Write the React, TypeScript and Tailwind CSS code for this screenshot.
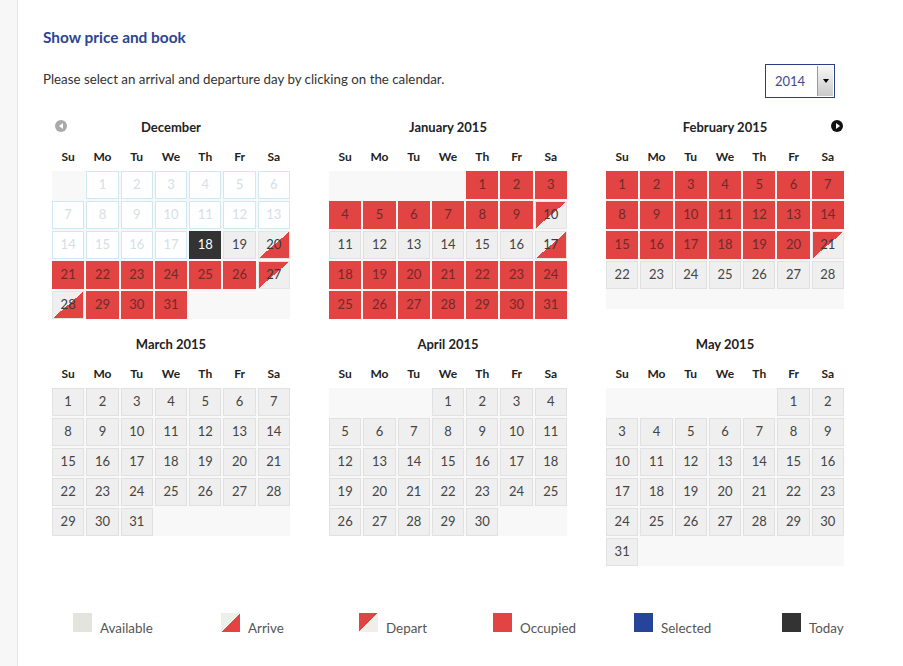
import React from "react";

type Status = "past" | "avail" | "occ" | "today" | "arrive" | "depart";

const cellClass: Record<Status, string> = {
  past: "bg-white border border-[#cfe8f2] text-[#d3e0e6]",
  avail: "bg-[#efefef] border border-[#e1e1e1] text-[#444]",
  occ: "bg-[#e24343] border border-[#e24343] text-[#702a2a]",
  today: "bg-[#333333] border border-[#333333] text-white",
  arrive:
    "border border-[#e4e4e4] bg-[linear-gradient(to_bottom_right,#efefef_50%,#e24343_50%)] text-[#3a3a3a]",
  depart:
    "border border-[#e4e4e4] bg-[linear-gradient(to_bottom_right,#e24343_50%,#efefef_50%)] text-[#3a3a3a]",
};

type Month = {
  title: string;
  start: number;
  days: number;
  status: (d: number) => Status;
  extra?: boolean;
  prev?: boolean;
  next?: boolean;
};

const months: Month[] = [
  {
    title: "December",
    start: 1,
    days: 31,
    prev: true,
    status: (d) => {
      if (d < 18) return "past";
      if (d === 18) return "today";
      if (d === 19) return "avail";
      if (d === 20 || d === 28) return "arrive";
      if (d === 27) return "depart";
      return "occ";
    },
  },
  {
    title: "January 2015",
    start: 4,
    days: 31,
    status: (d) => {
      if (d === 10) return "depart";
      if (d === 17) return "arrive";
      if (d >= 11 && d <= 16) return "avail";
      return "occ";
    },
  },
  {
    title: "February 2015",
    start: 0,
    days: 28,
    next: true,
    extra: true,
    status: (d) => {
      if (d <= 20) return "occ";
      if (d === 21) return "depart";
      return "avail";
    },
  },
  { title: "March 2015", start: 0, days: 31, status: () => "avail" },
  { title: "April 2015", start: 3, days: 30, status: () => "avail" },
  { title: "May 2015", start: 5, days: 31, status: () => "avail" },
];

const dayNames = ["Su", "Mo", "Tu", "We", "Th", "Fr", "Sa"];

function MonthView({ m }: { m: Month }) {
  const total = Math.ceil((m.start + m.days) / 7) * 7;
  const cells: (number | null)[] = [];
  for (let i = 0; i < total; i++) {
    const d = i - m.start + 1;
    cells.push(d >= 1 && d <= m.days ? d : null);
  }
  return (
    <div className="relative w-[238px]">
      {m.prev && (
        <div className="absolute left-[3px] top-[3px] flex h-[12px] w-[12px] items-center justify-center rounded-full bg-[#a9a9a9]">
          <div className="ml-[-1px] h-0 w-0 border-y-[3px] border-r-[4px] border-y-transparent border-r-white" />
        </div>
      )}
      {m.next && (
        <div className="absolute right-[1px] top-[3px] flex h-[12px] w-[12px] items-center justify-center rounded-full bg-[#111]">
          <div className="ml-[1px] h-0 w-0 border-y-[3px] border-l-[4px] border-y-transparent border-l-white" />
        </div>
      )}
      <div className="h-[20px] text-center text-[13px] font-bold leading-[20px] text-[#222]">
        {m.title}
      </div>
      <div className="mt-[10px] grid grid-cols-7 gap-x-[2px]">
        {dayNames.map((n) => (
          <div
            key={n}
            className="h-[20px] text-center text-[12px] font-bold leading-[20px] text-[#222]"
          >
            {n}
          </div>
        ))}
      </div>
      <div className="mt-[4px] bg-[#f8f8f8]">
        <div className="grid grid-cols-7 gap-[2px]">
          {cells.map((d, i) =>
            d === null ? (
              <div key={i} className="h-[28px]" />
            ) : (
              <div
                key={i}
                className={
                  "flex h-[28px] items-center justify-center text-[13px] " +
                  cellClass[m.status(d)]
                }
              >
                {d}
              </div>
            )
          )}
        </div>
        {m.extra && <div className="mt-[2px] h-[18px]" />}
      </div>
    </div>
  );
}

function Legend() {
  const items: { label: string; w: string; swatch: React.ReactNode }[] = [
    {
      label: "Available",
      w: "w-[148px]",
      swatch: <div className="h-[19px] w-[19px] bg-[#e3e4de]" />,
    },
    {
      label: "Arrive",
      w: "w-[138px]",
      swatch: (
        <div className="h-[19px] w-[19px] bg-[linear-gradient(to_bottom_right,#efeee9_50%,#e24343_50%)]" />
      ),
    },
    {
      label: "Depart",
      w: "w-[134px]",
      swatch: (
        <div className="h-[19px] w-[19px] bg-[linear-gradient(to_bottom_right,#e24343_50%,#efeee9_50%)]" />
      ),
    },
    {
      label: "Occupied",
      w: "w-[141px]",
      swatch: <div className="h-[19px] w-[19px] bg-[#e24343]" />,
    },
    {
      label: "Selected",
      w: "w-[148px]",
      swatch: <div className="h-[19px] w-[19px] bg-[#26449a]" />,
    },
    {
      label: "Today",
      w: "w-auto",
      swatch: <div className="h-[19px] w-[19px] bg-[#333333]" />,
    },
  ];
  return (
    <div className="ml-[30px] mt-[47px] flex">
      {items.map((it) => (
        <div key={it.label} className={"flex items-start " + it.w}>
          {it.swatch}
          <div className="ml-[8px] mt-[5px] text-[13.4px] leading-[20px] text-[#555]">
            {it.label}
          </div>
        </div>
      ))}
    </div>
  );
}

export default function App() {
  return (
    <div className="flex min-h-[666px] bg-white font-['Lato',sans-serif]">
      <div className="w-[18px] shrink-0 border-r border-[#e4e4e4] bg-[#f7f7f7]" />
      <div className="flex-1 pl-[25px] pt-[27px]">
        <h2 className="text-[15.4px] font-bold leading-[20px] text-[#2b4593]">
          Show price and book
        </h2>
        <div className="mt-[17px] flex w-[792px] items-start justify-between">
          <div className="mt-[6px] text-[13.3px] leading-[18px] text-[#333]">
            Please select an arrival and departure day by clicking on the calendar.
          </div>
          <div className="flex h-[34px] w-[70px] border border-[#2b3f87] bg-white">
            <div className="flex-1 pl-[9px] text-[13px] leading-[32px] text-[#3d4c8a]">
              2014
            </div>
            <div className="my-[1px] mr-[1px] flex w-[16px] justify-center border-l border-[#9a9a9a] bg-[linear-gradient(to_bottom,#f8f8f8,#c9c9c9)] pt-[13px]">
              <div className="h-0 w-0 border-x-[3px] border-t-[4px] border-x-transparent border-t-black" />
            </div>
          </div>
        </div>
        <div className="ml-[9px] mt-[19px] grid grid-cols-[238px_238px_238px] items-start gap-x-[39px] gap-y-[15px]">
          {months.map((m) => (
            <MonthView key={m.title} m={m} />
          ))}
        </div>
        <Legend />
      </div>
    </div>
  );
}
